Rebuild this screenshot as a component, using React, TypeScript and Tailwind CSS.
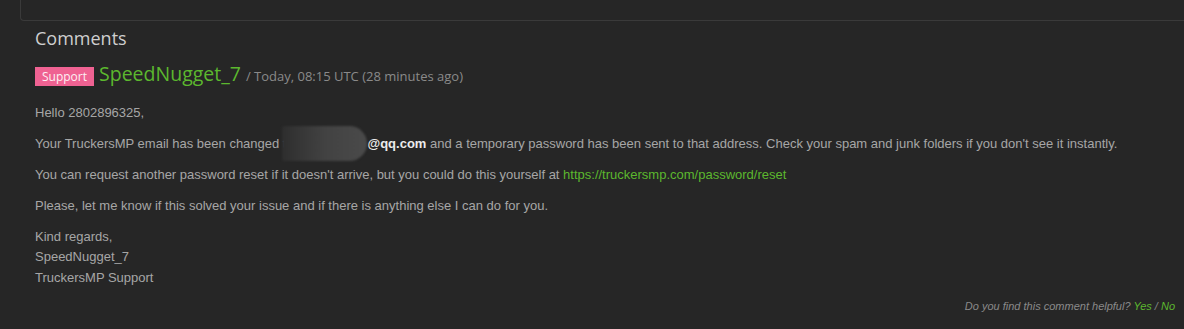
import React from "react";

export default function App() {
  const body = "font-['Liberation_Sans',Arial,sans-serif] text-[13px] leading-[20px] text-[#a6a6a6]";
  return (
    <div className="w-[1184px] h-[329px] bg-[#262626] overflow-hidden">
      <div className="ml-[20px] h-[21px] border-l border-b border-[#3a3a3a] rounded-bl-[4px]" />
      <div className="pl-[35px] pr-[9px]">
        <h3 className="mt-[7px] font-['Open_Sans',sans-serif] text-[18px] leading-[20px] text-[#cfcfcf]">
          Comments
        </h3>
        <div className="mt-[14px] flex items-baseline font-['Open_Sans',sans-serif]">
          <span className="inline-block bg-[#ef6292] text-[#fdf0f4] text-[12px] leading-[19px] h-[19px] px-[7px]">
            Support
          </span>
          <span className="ml-[5px] text-[19.5px] leading-[24px] text-[#5cb82e]">SpeedNugget_7</span>
          <span className="ml-[5px] text-[13px] text-[#8a8a8a]">/ Today, 08:15 UTC (28 minutes ago)</span>
        </div>
        <div className={`mt-[16px] ${body}`}>
          <p className="mb-[11px]">Hello 2802896325,</p>
          <p className="mb-[11px]">
            Your TruckersMP email has been changed t
            <span className="relative inline-block w-[81px] h-[1em] align-baseline">
              <span className="absolute left-[-4px] right-[0px] top-[-9px] bottom-[-13px] rounded-r-[40px] rounded-l-[6px] bg-gradient-to-r from-[#2e2e2e] via-[#424242] to-[#4a4a4a] blur-[1px]" />
            </span>
            <b className="text-[#ececec]">@qq.com</b> and a temporary password has been sent to that address. Check your spam and junk folders if you don't see it instantly.
          </p>
          <p className="mb-[11px]">
            You can request another password reset if it doesn't arrive, but you could do this yourself at{" "}
            <a className="text-[#5cb82e]">https://truckersmp.com/password/reset</a>
          </p>
          <p className="mb-[11px]">Please, let me know if this solved your issue and if there is anything else I can do for you.</p>
          <p className="leading-[20.5px]">
            Kind regards,
            <br />
            SpeedNugget_7
            <br />
            TruckersMP Support
          </p>
        </div>
        <div className="mt-[10px] text-right font-['Liberation_Sans',Arial,sans-serif] italic text-[11px] leading-[16px] text-[#8a8a8a]">
          Do you find this comment helpful? <span className="text-[#5cb82e]">Yes</span> / <span className="text-[#5cb82e]">No</span>
        </div>
      </div>
    </div>
  );
}
